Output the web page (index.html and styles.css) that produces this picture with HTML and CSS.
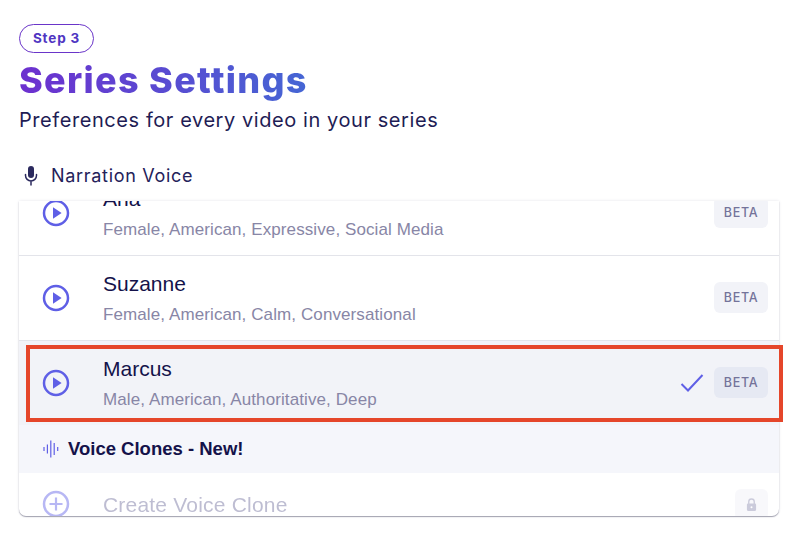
FILE: index.html
```html
<!DOCTYPE html>
<html lang="en">
<head>
<meta charset="utf-8">
<title>Series Settings</title>
<link rel="stylesheet" href="styles.css">
</head>
<body>
<main class="page">
  <span class="step">Step 3</span>
  <h1 class="title">Series Settings</h1>
  <p class="subtitle">Preferences for every video in your series</p>
  <div class="label">
    <svg class="mic" viewBox="0 0 16 22" width="16" height="22"><rect x="5" y="1" width="6" height="12" rx="3" fill="#2b2a5e"/><path d="M2.5 9.5v1a5.5 5.5 0 0 0 11 0v-1M8 16v4" fill="none" stroke="#2b2a5e" stroke-width="1.5" stroke-linecap="round"/></svg>
    <span>Narration Voice</span>
  </div>
  <div class="card">
    <div class="scroller">
      <div class="row">
        <svg class="play" viewBox="0 0 28 28" width="28" height="28"><circle cx="14" cy="14" r="12" fill="none" stroke="#5f5fe6" stroke-width="2.5"/><path d="M11 8.2v11.6l8.6-5.8z" fill="#5f5fe6"/></svg>
        <div class="info"><div class="name">Ana</div><div class="tags">Female, American, Expressive, Social Media</div></div>
        <span class="beta">BETA</span>
      </div>
      <div class="row">
        <svg class="play" viewBox="0 0 28 28" width="28" height="28"><circle cx="14" cy="14" r="12" fill="none" stroke="#5f5fe6" stroke-width="2.5"/><path d="M11 8.2v11.6l8.6-5.8z" fill="#5f5fe6"/></svg>
        <div class="info"><div class="name">Suzanne</div><div class="tags">Female, American, Calm, Conversational</div></div>
        <span class="beta">BETA</span>
      </div>
      <div class="row selected">
        <svg class="play" viewBox="0 0 28 28" width="28" height="28"><circle cx="14" cy="14" r="12" fill="none" stroke="#5f5fe6" stroke-width="2.5"/><path d="M11 8.2v11.6l8.6-5.8z" fill="#5f5fe6"/></svg>
        <div class="info"><div class="name">Marcus</div><div class="tags">Male, American, Authoritative, Deep</div></div>
        <svg class="check" viewBox="0 0 24 20" width="24" height="20"><path d="M1.5 11l6.5 6.5L22.5 2" fill="none" stroke="#5f5fe6" stroke-width="2"/></svg>
        <span class="beta">BETA</span>
      </div>
      <div class="section">
        <svg class="wave" viewBox="0 0 16 18" width="16" height="18"><path d="M1 7v4M4.400 4.500v9M7.800 .5v17M11.200 3v12M14.700 7v4" fill="none" stroke="#5f5fe6" stroke-width="1.200"/></svg>
        <span>Voice Clones - New!</span>
      </div>
      <div class="row create">
        <svg class="play" viewBox="0 0 28 28" width="28" height="28"><circle cx="14" cy="14" r="12" fill="none" stroke="#5f5fe6" stroke-width="2.5"/><path d="M14 7.5v13M7.5 14h13" fill="none" stroke="#5f5fe6" stroke-width="2.2"/></svg>
        <div class="info"><div class="name create-name">Create Voice Clone</div></div>
        <span class="lock"><svg viewBox="0 0 12 14" width="11" height="13"><path d="M3 6.5V4a3 3 0 0 1 6 0v2.500" fill="none" stroke="#8e8eb0" stroke-width="1.500"/><rect x="1" y="6" width="10" height="8" rx="1.200" fill="#8e8eb0"/><circle cx="6" cy="10" r="1.100" fill="#fff"/></svg></span>
      </div>
    </div>
  </div>
  <div class="highlight"></div>
</main>
</body>
</html>
```
FILE: styles.css
```css
* { box-sizing: border-box; }
html, body { margin: 0; background: #fff; }
body { width: 800px; height: 541px; overflow: hidden; font-family: "Liberation Sans", Arial, sans-serif; color: #14124a; }
.page { position: relative; padding: 24px 21px 0 19px; }
.step { display: block; width: 75px; height: 29px; border: 1.5px solid #6a35c9; border-radius: 15px; font: 700 13.5px/26px Inter, sans-serif; letter-spacing: .85px; color: #4f35c2; text-align: center; }
.title { margin: 6px 0 0; width: max-content; font: 800 36px/42px Inter, sans-serif; letter-spacing: 1.3px; background: linear-gradient(90deg, #6d30cf, #4566d4); -webkit-background-clip: text; background-clip: text; color: transparent; }
.subtitle { margin: 6px 0 0; font: 400 20px/26px Inter, sans-serif; letter-spacing: .57px; color: #1f1d55; }
.label { display: flex; align-items: center; gap: 12px; margin: 29px 0 0 4px; height: 28px; font: 400 18px/28px Inter, sans-serif; letter-spacing: .7px; color: #24225a; }
.card { margin-top: 11px; height: 315px; border-radius: 0 0 7px 7px; background: #fff; box-shadow: 0 0 3px rgba(40,40,90,.12), 0 1px 1px rgba(40,40,70,.4); overflow: hidden; }
.scroller { margin-top: -30px; }
.row { display: flex; align-items: center; height: 85px; padding: 0 11px 0 23px; border-bottom: 1px solid #e3e4ea; }
.play { flex: none; }
.info { flex: 1; margin-left: 33px; padding-top: 1px; }
.name { font-size: 21px; line-height: 24px; color: #14124a; }
.tags { margin-top: 9px; font-size: 17px; line-height: 20px; letter-spacing: .1px; color: #8886a6; }
.beta { flex: none; width: 54px; height: 31px; margin-bottom: 2px; border-radius: 6px; background: #f2f3f8; font: 500 12.5px/31px Inter, sans-serif; letter-spacing: .7px; color: #74739a; text-align: center; }
.selected { height: 84px; background: #f2f3f8; border-bottom: 0; }
.selected .beta { background: #e6e9f3; }
.check { margin-right: 10px; }
.section { display: flex; align-items: center; gap: 9px; height: 48px; padding-left: 24px; background: #f5f6fb; font-weight: 700; font-size: 18.5px; color: #14124a; }
.create { height: 62px; border: 0; opacity: .45; }
.create-name { font-size: 21px; letter-spacing: .2px; color: #6f6e9c; }
.lock { display: flex; align-items: center; justify-content: center; width: 33px; height: 31px; border-radius: 6px; background: #f0f0f7; }
.highlight { position: absolute; left: 26px; top: 345px; width: 757px; height: 77px; border: 4px solid #e5462a; }
```
